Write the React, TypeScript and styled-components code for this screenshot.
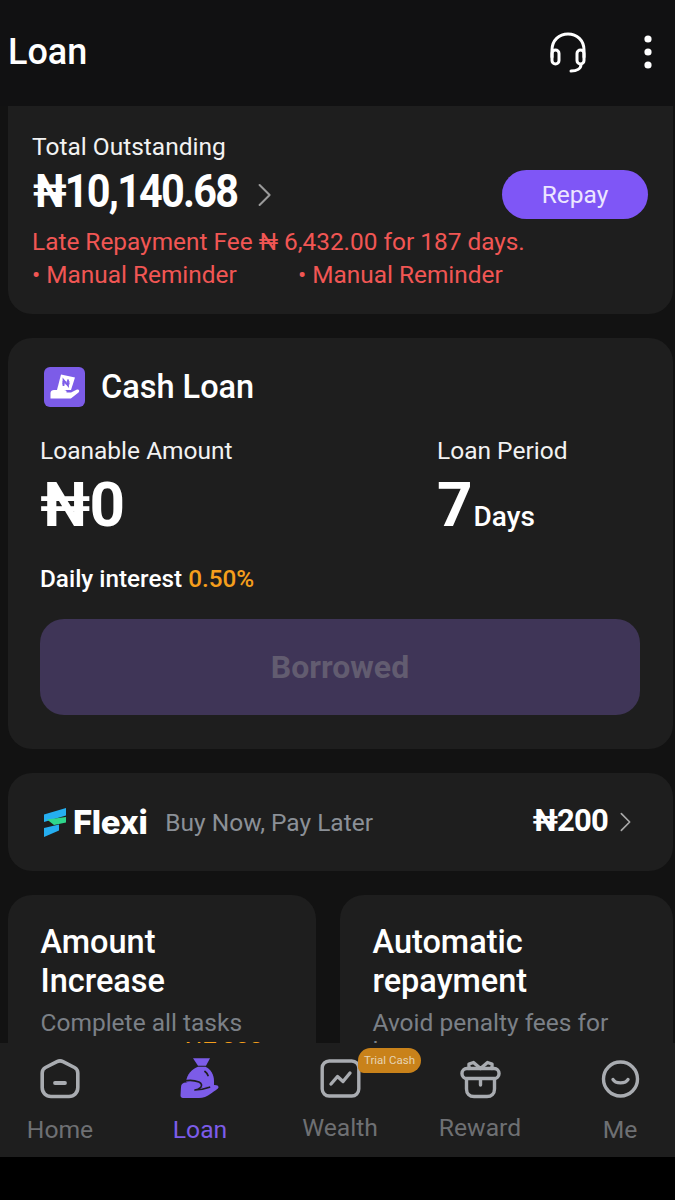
import React from "react";
import styled, { createGlobalStyle } from "styled-components";

const Global = createGlobalStyle`
  html, body { margin: 0; padding: 0; background: #000; }
  body { font-family: Roboto, "Liberation Sans", sans-serif; color: #fff; }
  * { box-sizing: border-box; }
`;

const Phone = styled.div`
  width: 675px;
  height: 1200px;
  display: flex;
  flex-direction: column;
  overflow: hidden;
  background: #000;
`;

const Header = styled.header`
  height: 106px;
  flex: none;
  display: flex;
  align-items: center;
  padding: 0 0 2px 8px;
  background: #111112;
`;

const PageTitle = styled.h1`
  margin: 0;
  flex: 1;
  font-size: 36px;
  font-weight: 500;
  line-height: 40px;
`;

const HeaderActions = styled.div`
  display: flex;
  align-items: center;
  gap: 58px;
  padding-right: 23px;
`;

const Content = styled.main`
  height: 937px;
  flex: none;
  overflow: hidden;
  background: #121212;
  padding: 0 2px 0 8px;
  display: flex;
  flex-direction: column;
  gap: 24px;
`;

const OutstandingCard = styled.section`
  flex: none;
  height: 208px;
  padding: 26px 25px 0 24px;
  background: #1e1e1e;
  border-radius: 0 0 24px 24px;
`;

const CardLabel = styled.div`
  font-size: 24.5px;
  line-height: 30px;
  color: #f2f2f2;
`;

const AmountRow = styled.div`
  display: flex;
  align-items: center;
  height: 49px;
  margin-top: 8px;
`;

/* The amount uses a tighter, condensed figure set, so the glyphs are narrowed in place. */
const Amount = styled.div`
  width: 206px;
  flex: none;
  font-size: 46px;
  font-weight: 700;
  line-height: 44px;
  letter-spacing: -2px;
  padding-bottom: 7px;
  margin-left: 1px;
  white-space: nowrap;
  transform: scaleX(0.9);
  transform-origin: left center;
`;

const ChevronGlyph = styled.svg<{ $gap: number }>`
  margin-left: ${(p) => p.$gap}px;
  flex: none;
`;

const Spacer = styled.div`
  flex: 1;
`;

const RepayButton = styled.button`
  width: 146px;
  height: 49px;
  border: 0;
  border-radius: 25px;
  background: #7f56f6;
  color: #ece6ff;
  font: 400 24.5px Roboto, sans-serif;
`;

const WarningLine = styled.div`
  margin-top: 7px;
  font-size: 24.4px;
  line-height: 32px;
  color: #f15654;
  white-space: nowrap;
`;

const WarningRow = styled.div`
  display: grid;
  grid-template-columns: 266px auto;
  margin-top: 1px;
  font-size: 24.4px;
  line-height: 32px;
  color: #f15654;
`;

const CashCard = styled.section`
  flex: none;
  background: #1e1e1e;
  border-radius: 24px;
  padding: 29px 32px 34px;
`;

const CashHead = styled.div`
  display: flex;
  align-items: center;
  gap: 16px;
  padding-left: 4px;
`;

const CashTitle = styled.h2`
  margin: 0;
  font-size: 32.5px;
  font-weight: 500;
  line-height: 40px;
`;

const Stats = styled.div`
  display: grid;
  grid-template-columns: 397px auto;
  margin-top: 29px;
`;

const StatValue = styled.div`
  margin-top: 9px;
  font-size: 62px;
  font-weight: 700;
  line-height: 60px;
  letter-spacing: -1px;
  white-space: nowrap;
`;

const StatUnit = styled.span`
  margin-left: 2px;
  font-size: 28px;
  font-weight: 500;
  line-height: 1;
  letter-spacing: 0;
`;

const Interest = styled.div`
  margin-top: 29px;
  font-size: 24.3px;
  font-weight: 500;
  line-height: 30px;
`;

const Accent = styled.span`
  color: #f59e1c;
`;

const BorrowButton = styled.button`
  display: block;
  width: 600px;
  height: 96px;
  margin-top: 25px;
  border: 0;
  border-radius: 24px;
  background: #3f3557;
  color: #625c70;
  font: 700 32px Roboto, sans-serif;
`;

const FlexiCard = styled.section`
  flex: none;
  height: 98px;
  display: flex;
  align-items: center;
  padding: 0 42px 0 36px;
  background: #1e1e1e;
  border-radius: 24px;
`;

const FlexiName = styled.span`
  margin-left: 7px;
  font-family: Inter, sans-serif;
  font-size: 33px;
  font-weight: 800;
  letter-spacing: -0.5px;
`;

const FlexiTag = styled.span`
  margin-left: 18px;
  flex: 1;
  font-size: 24.5px;
  color: #8b9097;
`;

const FlexiPrice = styled.span`
  font-size: 31px;
  font-weight: 700;
  letter-spacing: -0.8px;
  margin-top: -3px;
`;

const PromoRow = styled.div`
  flex: none;
  display: grid;
  grid-template-columns: 308px 333px;
  gap: 24px;
`;

const PromoCard = styled.section`
  height: 200px;
  padding: 28px 0 0 32.5px;
  background: #1e1e1e;
  border-radius: 24px;
`;

const PromoTitle = styled.h3`
  margin: 0;
  font-size: 32.5px;
  font-weight: 500;
  line-height: 39px;
`;

const PromoText = styled.p`
  margin: 8px 0 0;
  font-size: 24.5px;
  line-height: 28px;
  color: #7b8087;
`;

const TabBar = styled.nav`
  height: 114px;
  flex: none;
  display: grid;
  grid-template-columns: repeat(5, 110px);
  gap: 30px;
  padding-left: 5px;
  background: #1e1e1e;
`;

const Tab = styled.div`
  position: relative;
  display: flex;
  flex-direction: column;
  align-items: center;
  padding-top: 15px;
`;

const TabIcon = styled.svg`
  display: block;
  flex: none;
`;

const TabLabel = styled.span<{ $active?: boolean; $raised?: boolean }>`
  margin-top: ${(p) => (p.$raised ? "14px" : "16px")};
  font-size: 24.7px;
  line-height: 30px;
  white-space: nowrap;
  color: ${(p) => (p.$active ? "#7c5ce8" : "#6e7073")};
`;

const TrialBadge = styled.span`
  position: absolute;
  left: 73px;
  top: 5px;
  width: 63px;
  height: 25px;
  border-radius: 13px 13px 13px 6px;
  background: #c9821a;
  color: #e6d4b4;
  font-size: 11.5px;
  line-height: 25px;
  text-align: center;
  white-space: nowrap;
`;

const Headset = () => (
  <svg width="36" height="41" viewBox="0 0 36 41" fill="none" stroke="#fff" strokeWidth="3" strokeLinecap="round">
    <path d="M2 25V18C2 8.5 9 2 18 2S34 8.5 34 18V25" />
    <rect x="2" y="18" width="7" height="14" rx="3.5" />
    <rect x="27" y="18" width="7" height="14" rx="3.5" />
    <path d="M31 32.5C31 36.5 27 39 21 39" />
  </svg>
);

const Dots = () => (
  <svg width="8" height="34" viewBox="0 0 8 34" fill="#fff">
    <circle cx="4" cy="4" r="3.6" />
    <circle cx="4" cy="17" r="3.6" />
    <circle cx="4" cy="30" r="3.6" />
  </svg>
);

const Chevron = ({ size = 24, color = "#9a9a9a", gap }: { size?: number; color?: string; gap: number }) => (
  <ChevronGlyph $gap={gap} width={size * 0.55} height={size} viewBox="0 0 13 24" fill="none" stroke={color} strokeWidth="2" strokeLinecap="round" strokeLinejoin="round">
    <path d="M1.5 2L11.5 12L1.5 22" />
  </ChevronGlyph>
);

const CashIcon = () => (
  <svg width="41" height="40" viewBox="0 0 41 40">
    <rect width="41" height="40" rx="6" fill="#7c5ce8" />
    <path d="M17 7.5L31 10.5L27 23H13Z" fill="#fff" />
    <path d="M19.5 19V13L24 18.5V12.5" fill="none" stroke="#7c5ce8" strokeWidth="1.8" />
    <path d="M18 15H26M18 16.8H26" stroke="#7c5ce8" strokeWidth="0.8" />
    <path d="M6.5 26C6.5 24 8 23 10 23H20C22 23 23 24 22.5 25.5H27L33 22.5C35 22 36 24 34.5 25.5L27.5 31C27 31.4 26.5 31.5 26 31.5H6.5Z" fill="#fff" />
  </svg>
);

const FlexiLogo = () => (
  <svg width="22" height="29" viewBox="0 0 22 29">
    <path d="M0 6.5L22 0V7.5L0 14Z" fill="#25aef0" />
    <path d="M3 11.5L22 9V14.5L10 17Z" fill="#2fd68c" />
    <path d="M0 20L15 16.5V22.5L0 29Z" fill="#25aef0" />
  </svg>
);

const HomeIcon = () => (
  <TabIcon width="40" height="41" viewBox="0 0 40 41" fill="none" stroke="#a9acb1" strokeWidth="3.6" strokeLinecap="round" strokeLinejoin="round">
    <path d="M17 3.6C19 2.6 21 2.6 23 3.6L34.5 9.5C36.6 10.6 37.8 12.6 37.8 15V29.5C37.8 34.8 34 38.5 29 38.5H11C6 38.5 2.2 34.8 2.2 29.5V15C2.2 12.6 3.4 10.6 5.5 9.5Z" />
    <path d="M15 25H25" strokeWidth="3.8" />
  </TabIcon>
);

const BagIcon = () => (
  <TabIcon width="40" height="41" viewBox="0 0 40 41">
    <path d="M13 0.3H30L26 7.7H18Z" fill="#7c5ce8" />
    <path d="M18 8.8H25.5C30.5 11 34 16.5 34 23V28L16 30L6 24C7 16 12 11 18 8.8Z" fill="#7c5ce8" />
    <path d="M1 29C1 26 3 24.5 6 24.5H16C19.5 24.5 22 26.5 21 29.5L31 27.5C34 26.5 39 26.5 38.5 29.5C38 31 35 32.5 31 35.5C27 38.5 23 40 19 40H3C1.5 40 0.5 39 0.5 37.5Z" fill="#7c5ce8" />
    <path d="M3.5 23.2C8 22 15 22.4 19 24C21.6 25.2 22.4 27.8 20.5 29.6C19 31 17 31.7 15 32M15 32C20 32 25 30.8 29.5 29.2" fill="none" stroke="#1e1e1e" strokeWidth="1.7" strokeLinecap="round" />
    <path d="M25 13.5C26.4 14.5 27.4 15.8 28 17.5" fill="none" stroke="#1e1e1e" strokeWidth="1.8" strokeLinecap="round" />
  </TabIcon>
);

const WealthIcon = () => (
  <TabIcon width="41" height="41" viewBox="0 0 41 41" fill="none" stroke="#a9acb1" strokeWidth="3.4" strokeLinecap="round" strokeLinejoin="round">
    <rect x="2.2" y="3" width="36.6" height="35" rx="7" />
    <path d="M11 26L17.5 18.5L23 23.5L30 15" />
  </TabIcon>
);

const RewardIcon = () => (
  <TabIcon width="41" height="41" viewBox="0 0 41 41" fill="none" stroke="#a9acb1" strokeWidth="3.4" strokeLinecap="round" strokeLinejoin="round">
    <path d="M20.5 10.5L13.5 4.5L9 6V10.5M20.5 10.5L27.5 4.5L32 6V10.5" />
    <rect x="2" y="10.5" width="37" height="10" rx="4.8" />
    <path d="M6.5 21V31C6.5 35.5 9.5 38.5 14 38.5H27C31.5 38.5 34.5 35.5 34.5 31V21" />
    <path d="M20.5 21V27" />
  </TabIcon>
);

const MeIcon = () => (
  <TabIcon width="41" height="41" viewBox="0 0 41 41" fill="none" stroke="#a9acb1" strokeWidth="3.4" strokeLinecap="round">
    <circle cx="20.5" cy="21" r="17" />
    <path d="M13 21.5C15.5 26 25.5 26 28 21.5" />
  </TabIcon>
);

export default function App() {
  return (
    <Phone>
      <Global />
      <Header>
        <PageTitle>Loan</PageTitle>
        <HeaderActions>
          <Headset />
          <Dots />
        </HeaderActions>
      </Header>

      <Content>
        <OutstandingCard>
          <CardLabel>Total Outstanding</CardLabel>
          <AmountRow>
            <Amount>₦10,140.68</Amount>
            <Chevron gap={19} />
            <Spacer />
            <RepayButton>Repay</RepayButton>
          </AmountRow>
          <WarningLine>Late Repayment Fee ₦ 6,432.00 for 187 days.</WarningLine>
          <WarningRow>
            <span>• Manual Reminder</span>
            <span>• Manual Reminder</span>
          </WarningRow>
        </OutstandingCard>

        <CashCard>
          <CashHead>
            <CashIcon />
            <CashTitle>Cash Loan</CashTitle>
          </CashHead>
          <Stats>
            <div>
              <CardLabel>Loanable Amount</CardLabel>
              <StatValue>₦0</StatValue>
            </div>
            <div>
              <CardLabel>Loan Period</CardLabel>
              <StatValue>
                7<StatUnit>Days</StatUnit>
              </StatValue>
            </div>
          </Stats>
          <Interest>
            Daily interest <Accent>0.50%</Accent>
          </Interest>
          <BorrowButton>Borrowed</BorrowButton>
        </CashCard>

        <FlexiCard>
          <FlexiLogo />
          <FlexiName>Flexi</FlexiName>
          <FlexiTag>Buy Now, Pay Later</FlexiTag>
          <FlexiPrice>₦200</FlexiPrice>
          <Chevron gap={12} size={20} color="#a8a8a8" />
        </FlexiCard>

        <PromoRow>
          <PromoCard>
            <PromoTitle>
              Amount
              <br />
              Increase
            </PromoTitle>
            <PromoText>
              Complete all tasks
              <br />
              to earn up to <Accent>₦7,000</Accent>
            </PromoText>
          </PromoCard>
          <PromoCard>
            <PromoTitle>
              Automatic
              <br />
              repayment
            </PromoTitle>
            <PromoText>
              Avoid penalty fees for
              <br />
              late payments
            </PromoText>
          </PromoCard>
        </PromoRow>
      </Content>

      <TabBar>
        <Tab>
          <HomeIcon />
          <TabLabel>Home</TabLabel>
        </Tab>
        <Tab>
          <BagIcon />
          <TabLabel $active>Loan</TabLabel>
        </Tab>
        <Tab>
          <WealthIcon />
          <TabLabel $raised>Wealth</TabLabel>
          <TrialBadge>Trial Cash</TrialBadge>
        </Tab>
        <Tab>
          <RewardIcon />
          <TabLabel $raised>Reward</TabLabel>
        </Tab>
        <Tab>
          <MeIcon />
          <TabLabel>Me</TabLabel>
        </Tab>
      </TabBar>
    </Phone>
  );
}
